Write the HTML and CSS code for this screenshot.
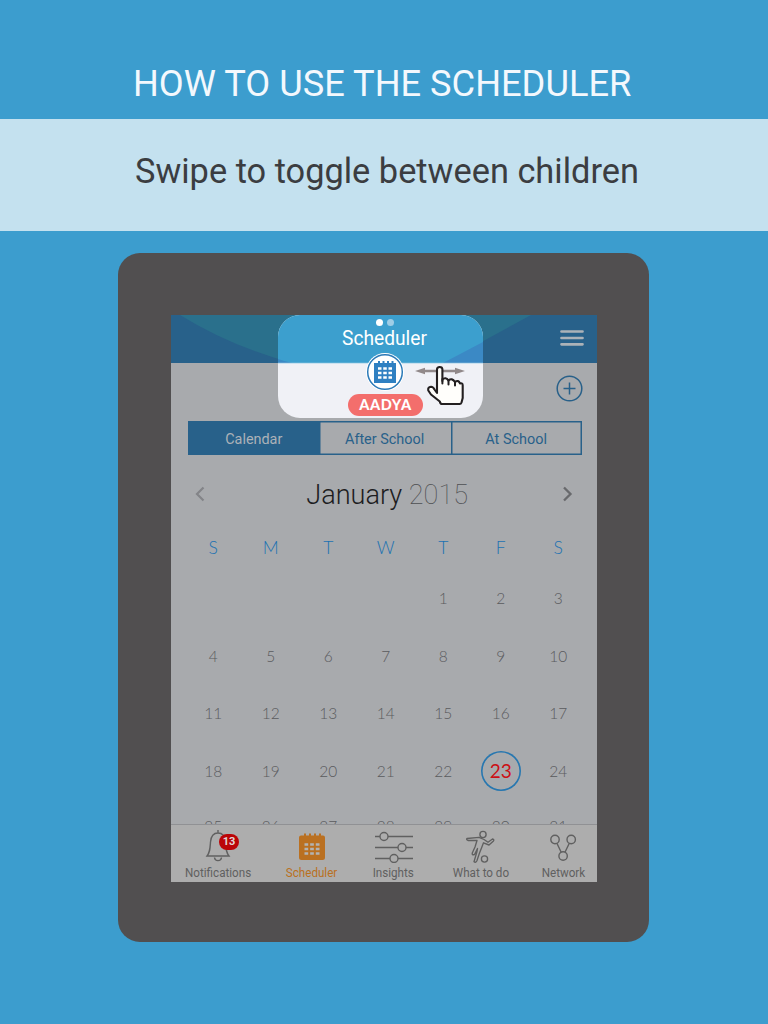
FILE: index.html
```html
<!DOCTYPE html>
<html lang="en">
<head>
<meta charset="utf-8">
<title>How to use the scheduler</title>
<link rel="stylesheet" href="styles.css">
</head>
<body>
<header class="title"><h1>HOW TO USE THE SCHEDULER</h1></header>
<section class="band"><p>Swipe to toggle between children</p></section>
<main class="device">
  <div class="screen">
    <div class="topbar">
      <svg class="swoosh" width="426" height="48" viewBox="0 0 426 48"><path d="M9 0Q59 31 121 48H272L360 0Z" fill="#2a708c"/></svg>
      <svg class="menu" width="24" height="16" viewBox="0 0 24 16"><path d="M1.5 1.5H22.5M1.5 8H22.5M1.5 14.3H22.5" stroke="#acb2b8" stroke-width="2.7" stroke-linecap="round"/></svg>
    </div>
    <div class="actions">
      <svg width="27" height="27" viewBox="0 0 27 27" fill="none" stroke="#286089" stroke-width="1.5"><circle cx="13.5" cy="13.5" r="12.3"/><path d="M7.5 13.5H19.5M13.5 7.5V19.5"/></svg>
    </div>
    <nav class="tabs"><span class="tab on"><em>Calendar</em></span><span class="tab"><em>After School</em></span><span class="tab"><em>At School</em></span></nav>
    <div class="month">
      <svg width="10" height="16" viewBox="0 0 10 16"><path d="M8.5 1.5L2 8L8.5 14.5" fill="none" stroke="#838488" stroke-width="2.2"/></svg>
      <h2>January <span>2015</span></h2>
      <svg width="10" height="16" viewBox="0 0 10 16"><path d="M1 1.500L7.500 8L1 14.500" fill="none" stroke="#68696c" stroke-width="2.3"/></svg>
    </div>
    <div class="week"><span>S</span><span>M</span><span>T</span><span>W</span><span>T</span><span>F</span><span>S</span></div>
    <div class="days">
      <span></span><span></span><span></span><span></span><span>1</span><span>2</span><span>3</span>
      <span>4</span><span>5</span><span>6</span><span>7</span><span>8</span><span>9</span><span>10</span>
      <span>11</span><span>12</span><span>13</span><span>14</span><span>15</span><span>16</span><span>17</span>
      <span>18</span><span>19</span><span>20</span><span>21</span><span>22</span><span><b class="today">23</b></span><span>24</span>
      <span>25</span><span>26</span><span>27</span><span>28</span><span>29</span><span>30</span><span>31</span>
    </div>
    <footer class="bottom">
      <div class="item notifications">
        <svg width="26" height="34" viewBox="0 0 26 34" fill="none" stroke="#606060" stroke-width="1.4"><path d="M13 1V4M2 27H24C21 23 21 20 20.5 13C20 7 17.5 4 13 4S6 7 5.500 13C5 20 5 23 2 27ZM9.500 28.500C10 32.700 16 32.700 16.500 28.500"/></svg>
        <span class="badge">13</span>
        <span class="label">Notifications</span>
      </div>
      <div class="item active">
        <svg width="28" height="34" viewBox="0 0 28 34"><path d="M3 6.500H6V4.500H8V6.500H11V4.500H13V6.500H16V4.500H18V6.500H21V4.500H23V6.500H25Q27 6.500 27 8.500V28.500Q27 31 24.500 31H3.500Q1 31 1 28.500V8.500Q1 6.500 3 6.500Z" fill="#ba7021"/><path d="M6.500 15.500H21.500M6.500 20H21.500M6.500 24.500H21.500" stroke="#b3b3b2" stroke-width="2.700" stroke-dasharray="3.700 1.950"/></svg>
        <span class="label">Scheduler</span>
      </div>
      <div class="item insights">
        <svg width="38" height="34" viewBox="0 0 38 34" fill="none" stroke="#606060" stroke-width="1.400"><path d="M0 7.500H5M13 7.500H38M0 18.500H23M31 18.500H38M0 29.500H15M23 29.500H38"/><circle cx="9" cy="7.500" r="4"/><circle cx="27" cy="18.500" r="4"/><circle cx="19" cy="29.500" r="4"/></svg>
        <span class="label">Insights</span>
      </div>
      <div class="item todo">
        <svg width="32" height="34" viewBox="0 0 32 34" fill="none" stroke="#606060" stroke-width="1.350" stroke-linejoin="round"><circle cx="18" cy="5.500" r="3.100"/><circle cx="19.500" cy="30" r="3.100"/><path d="M2 9.500L14 8.300L19 10.500L23 13.300L27.500 10Q29.500 10.500 28.500 12L24 16L18.500 13.800L16.700 18.500L14.500 24L12 31.500Q10.900 34.200 9 32.800L12 22.500L12.500 19.500L9.500 25.500Q6.800 26.500 7.300 24L10 18L12 11.500L3 11.500Q1 10.500 2 9.500Z"/></svg>
        <span class="label">What to do</span>
      </div>
      <div class="item network">
        <svg width="28" height="34" viewBox="0 0 28 34" fill="none" stroke="#606060" stroke-width="1.400"><circle cx="6" cy="10.500" r="4.200"/><circle cx="22.200" cy="10.500" r="4.200"/><circle cx="14.100" cy="27" r="4.200"/><path d="M7.900 14.300L12.200 23.200M20.300 14.300L16 23.200"/></svg>
        <span class="label">Network</span>
      </div>
    </footer>
    <div class="spotlight">
      <svg class="sweep" width="205" height="49" viewBox="0 0 205 49"><path d="M0 0H205V48H0Z" fill="#3c9fce"/><path d="M0 44Q7 46.500 14 48H0ZM165 48L205 27V48Z" fill="#3b89c5"/><path d="M0 48.300H205" stroke="#c2dfef" stroke-width="1"/></svg>
      <div class="dots"><i></i><i></i></div>
      <strong>Scheduler</strong>
      <svg class="avatar" width="38" height="38" viewBox="0 0 38 38"><circle cx="19" cy="19" r="19" fill="#fff"/><circle cx="19" cy="19" r="17.300" fill="none" stroke="#2b7ab8" stroke-width="1.500"/><path d="M9 10H12V8H14V10H16.500V8H18.500V10H21V8H23V10H25.500V8H27.500V10H30V30H8V10Z" fill="#2f80c2"/><path d="M12 15.500H26M12 20H26M12 24.500H26" stroke="#fff" stroke-width="2.700" stroke-dasharray="3.500 1.750"/></svg>
      <span class="name">AADYA</span>
      <svg class="swipe" width="52" height="42" viewBox="0 0 52 42"><path d="M1 6L11 2.800V4.700H41V2.800L51 6L41 9.200V7.300H11V9.200Z" fill="#91898a"/><path d="M23 28V4.500Q23 2 25.700 2T28.400 4.500V16V14.500Q31.500 11.500 34.500 15.500Q38 12.500 41 17Q44.500 14.500 46 18.500Q48.700 17.500 48.700 20.500V33L47.500 37.500Q47 39 45.500 39H28Q26.300 39 25.800 36.500L17 29.500L14.300 25.500Q13.500 22 17 21.700Q19.300 21.800 20.500 24.500Z" fill="#fffefb" stroke="#231f20" stroke-width="2.1" stroke-linejoin="round"/><path d="M28.400 14V18.500M34.500 15.500V19.500M41 17V20.500" stroke="#231f20" stroke-width="2" stroke-linecap="round"/></svg>
    </div>
  </div>
</main>
</body>
</html>
```

FILE: styles.css
```css
* { box-sizing: border-box; }
body { margin: 0; width: 768px; height: 1024px; overflow: hidden; background: #3c9dce; font-family: Roboto, sans-serif; }
svg { display: block; flex: none; }
h1, h2, p { margin: 0; font-weight: 400; white-space: nowrap; }
.title { height: 119px; padding: 61px 0 0 133px; color: #f3f8fd; }
.title h1 { width: max-content; font-size: 37.5px; line-height: 44px; transform: scaleX(.966); transform-origin: 0 0; }
.band { height: 112px; padding: 30px 0 0 134.5px; background: #c4e1ef; color: #3b3d41; }
.band p { width: max-content; font-size: 35.5px; line-height: 44px; transform: scaleX(.968); transform-origin: 0 0; }
.device { width: 531px; height: 689px; margin: 22px 0 0 118px; padding: 62px 52px 60px 53px; border-radius: 22px; background: #514f50; }
.screen { position: relative; width: 426px; height: 567px; display: flex; flex-direction: column; background: #a8aaad; overflow: hidden; }
.topbar { height: 48px; flex: none; display: flex; justify-content: flex-end; padding: 15px 13px 0 0; background: #28618a; position: relative; }
.swoosh { position: absolute; inset: 0; }
.menu { position: relative; }
.actions { height: 58px; flex: none; display: flex; justify-content: flex-end; padding: 12px 14px 0 0; }
.tabs { height: 34px; flex: none; margin: 0 15px 0 17px; display: grid; grid-template-columns: repeat(3, 1fr); box-shadow: inset 0 0 0 1.5px #28618a; color: #28618a; }
.tab { display: flex; align-items: center; justify-content: center; font-size: 15.5px; padding-top: 1px; }
.tab + .tab { box-shadow: inset 1.5px 0 0 #28618a; }
.tab em { font-style: normal; transform: scaleX(.93); }
.tab.on { background: #28618a; color: #acb2b8; }
.month { height: 78px; flex: none; display: flex; align-items: center; justify-content: space-between; padding: 0 24px; }
.month h2 { font-size: 28.5px; font-weight: 300; color: #1d1d1f; transform: translateX(3px) scaleX(.95); }
.month h2 span { font-weight: 100; color: #4e4f52; }
.week, .days { flex: none; display: grid; grid-template-columns: repeat(7, 57.5px); padding-left: 13.5px; text-align: center; }
.week { height: 30px; line-height: 30px; color: #1c72b2; font: 300 17.5px/29px Lato, sans-serif; }
.days { height: 261px; padding-top: 6.5px; grid-auto-rows: 57.5px; overflow: hidden; color: #5a5b5e; font: 300 15.5px/58px Lato, sans-serif; }
.days > span { display: flex; justify-content: center; align-items: center; }
.days > span:nth-child(n+29) { transform: translateY(-2px); }
.today { width: 40px; height: 40px; flex: none; box-shadow: inset 0 0 0 1.6px #2777b0; border-radius: 50%; color: #cc1016; font-size: 19px; line-height: 40px; font-weight: 400; }
.bottom { height: 58px; flex: none; display: grid; grid-template-columns: 94px 93px 71px 104.6px 58.8px; padding-top: 4px; background: #adadad; border-top: 1px solid #909194; color: #606060; }
.item { position: relative; display: flex; flex-direction: column; align-items: center; }
.active { color: #ba7021; }
.label { margin-top: 3px; font-size: 12px; line-height: 15px; white-space: nowrap; transform: scaleX(.97); }
.badge { position: absolute; left: 48px; top: 5px; width: 20px; height: 16px; border-radius: 8px; background: #bb0508; color: #e0d6d6; font-size: 11px; font-weight: 700; line-height: 16px; text-align: center; }
.spotlight { position: absolute; left: 107px; top: 0; width: 205px; height: 103px; border-radius: 22px; overflow: hidden; background: #f0f1f6; }
.sweep { position: absolute; left: 0; top: 0; }
.dots { position: absolute; left: 98px; top: 4px; display: flex; gap: 4px; }
.dots i { width: 7px; height: 7px; border-radius: 50%; background: #fff; }
.dots i + i { background: #9fcde6; }
.spotlight strong { position: absolute; left: 64px; top: 11px; font-size: 20px; line-height: 24px; font-weight: 400; color: #fff; transform: scaleX(.96); transform-origin: 0 0; }
.avatar { position: absolute; left: 88px; top: 38px; }
.name { position: absolute; left: 70px; top: 79px; width: 75px; height: 22px; border-radius: 11px; background: #f36e6c; color: #fff; font: 900 14.5px/21px Lato, sans-serif; letter-spacing: .6px; text-align: center; }
.swipe { position: absolute; left: 136px; top: 50px; }
```
